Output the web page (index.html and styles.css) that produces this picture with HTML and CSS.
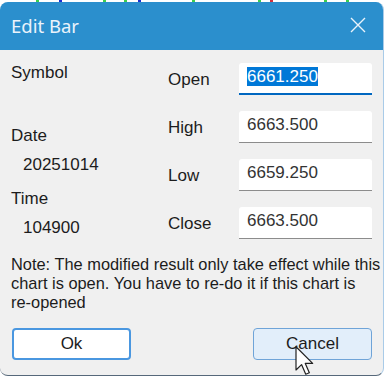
FILE: index.html
```html
<!DOCTYPE html>
<html lang="en">

<head>
    <meta charset="UTF-8">
    <meta name="viewport" content="width=device-width, initial-scale=1.0">
    <title>Edit Bar</title>
    <link rel="stylesheet" href="styles.css">
</head>

<body>
    <div class="chart-strip">
        <span class="tick green" style="left: 36px"></span>
        <span class="tick blue" style="left: 59px"></span>
        <span class="tick green" style="left: 103px"></span>
        <span class="tick green" style="left: 124px"></span>
        <span class="tick blue" style="left: 138px"></span>
        <span class="tick green" style="left: 192px"></span>
        <span class="tick green" style="left: 258px"></span>
        <span class="tick red" style="left: 270px"></span>
        <span class="tick green" style="left: 324px"></span>
        <span class="tick green" style="left: 346px"></span>
    </div>

    <div class="window">
        <div class="title-bar">
            <span class="title">Edit Bar</span>
            <svg class="close" width="16" height="16" viewBox="0 0 16 16">
                <path d="M1 1 L15 15 M15 1 L1 15" stroke="#eaf3fb" stroke-width="1.4" fill="none" />
            </svg>
        </div>

        <div class="content">
            <div class="fields">
                <div class="info">
                    <div class="label symbol">Symbol</div>
                    <div class="label date">Date</div>
                    <div class="value">20251014</div>
                    <div class="label time">Time</div>
                    <div class="value">104900</div>
                </div>

                <div class="prices">
                    <span class="price-label">Open</span>
                    <div class="field focused"><span class="selected">6661.250</span></div>
                    <span class="price-label">High</span>
                    <div class="field">6663.500</div>
                    <span class="price-label">Low</span>
                    <div class="field">6659.250</div>
                    <span class="price-label">Close</span>
                    <div class="field">6663.500</div>
                </div>
            </div>

            <p class="note">Note: The modified result only take effect while this<br>chart is open. You have to re-do it if this chart is<br>re-opened</p>

            <div class="buttons">
                <button class="btn default">Ok</button>
                <button class="btn hover">Cancel</button>
            </div>
        </div>
    </div>

    <!-- mouse pointer over Cancel -->
    <svg class="pointer" width="20" height="30" viewBox="0 0 13 20">
        <path d="M0.5 0.5 L0.5 16 L4.2 12.4 L7 18.8 L9.4 17.8 L6.7 11.6 L11.6 11.6 Z" fill="#ffffff" stroke="#222222" stroke-width="0.8" stroke-linejoin="round" />
    </svg>
</body>

</html>
```

FILE: styles.css
```css
body {
    margin: 0;
    width: 385px;
    height: 377px;
    overflow: hidden;
    background: #ffffff;
    font-family: "Liberation Sans", Arial, sans-serif;
    position: relative;
}

.chart-strip {
    position: absolute;
    top: 0;
    left: 0;
    width: 385px;
    height: 3px;
}

.tick {
    position: absolute;
    top: 0;
    width: 3px;
    height: 2px;
}

.tick.green {
    background: #3ccf4e;
}

.tick.blue {
    background: #1c2fd0;
}

.tick.red {
    background: #d3303a;
}

.window {
    margin-top: 2px;
    width: 383px;
    height: 373px;
    background: #f0f0f0;
    border-right: 1px solid #a9cbe8;
    border-bottom: 1px solid #56687a;
    border-radius: 8px;
    overflow: hidden;
    display: flex;
    flex-direction: column;
}

.title-bar {
    height: 48px;
    background: #2b8fcd;
    display: flex;
    align-items: center;
    justify-content: space-between;
    padding: 0 17px 0 11px;
    flex-shrink: 0;
}

.title {
    font-family: "Noto Sans", "Open Sans", sans-serif;
    font-size: 18.5px;
    color: #eaf3fb;
    margin-top: -2px;
}

.close {
    margin-top: -2px;
}

.content {
    padding: 13px 11px 0 11px;
    color: #1c1c1c;
    font-size: 17px;
}

.fields {
    display: flex;
}

.info {
    width: 158px;
    line-height: 20px;
}

.label.date {
    margin-top: 43px;
}

.label.time {
    margin-top: 14px;
}

.value {
    margin-top: 9px;
    padding-left: 12px;
}

.prices {
    display: grid;
    grid-template-columns: 71px 133px;
    row-gap: 16px;
    align-items: center;
}

.price-label {
    padding-top: 2px;
}

.field {
    height: 31px;
    padding: 0 0 0 8px;
    background: #ffffff;
    border-bottom: 1px solid #8c8c8c;
    border-radius: 3px 3px 0 0;
    line-height: 28px;
    color: #333333;
}

.field.focused {
    height: 30px;
    border-bottom: 2px solid #0067c0;
}

.selected {
    background: #0078d7;
    color: #ffffff;
}

.note {
    margin: 16px 0 0 0;
    line-height: 19px;
    font-size: 16.4px;
    white-space: nowrap;
}

.buttons {
    display: flex;
    justify-content: space-between;
    margin-top: 16px;
    padding-left: 1px;
}

.btn {
    width: 119px;
    height: 32px;
    font-family: "Liberation Sans", Arial, sans-serif;
    font-size: 17px;
    color: #1c1c1c;
    border-radius: 4px;
    padding: 0;
}

.btn.default {
    background: #ffffff;
    border: 2px solid #4a97e0;
}

.btn.hover {
    background: #e2eefa;
    border: 1px solid #6fa4d8;
}

.pointer {
    position: absolute;
    left: 295px;
    top: 346px;
}
```
